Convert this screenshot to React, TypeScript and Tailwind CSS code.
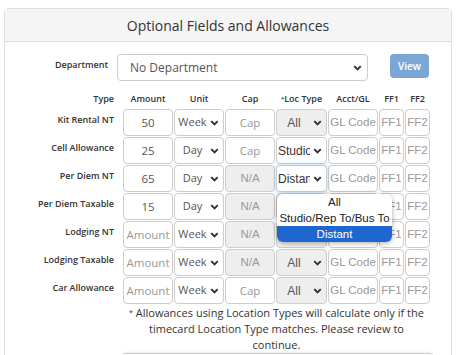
import * as React from "react";

type Cell = { text: string; kind: "value" | "placeholder" | "na" };
type Loc = { text: string; kind: "disabled" | "open" | "focus" };

interface IRow {
  label: string;
  amount: Cell;
  unit: string;
  cap: Cell;
  loc: Loc;
}

const Chevron = () => (
  <svg width="9" height="6" viewBox="0 0 10 7" className="shrink-0">
    <path d="M1.2 1.3 L5 5.2 L8.8 1.3" fill="none" stroke="#333" strokeWidth="2.3" />
  </svg>
);

const arial = "font-['Liberation_Sans',Arial,sans-serif]";
const box = "h-[27px] border border-[#ccc] rounded-[4px] flex items-center overflow-hidden";

const InputCell = ({ cell, w }: { cell: Cell; w: string }) => (
  <div
    className={`${box} ${w} justify-center ${
      cell.kind === "na" ? `bg-[#eee] text-[#999] text-[11.5px] ${arial}` : "bg-white text-[11.5px]"
    } ${cell.kind === "value" ? "text-[#555]" : ""} ${cell.kind === "placeholder" ? "text-[#999]" : ""}`}
  >
    {cell.text}
  </div>
);

const App: React.FunctionComponent = () => {
  const rows: IRow[] = [
    { label: "Kit Rental NT", amount: { text: "50", kind: "value" }, unit: "Week", cap: { text: "Cap", kind: "placeholder" }, loc: { text: "All", kind: "disabled" } },
    { label: "Cell Allowance", amount: { text: "25", kind: "value" }, unit: "Day", cap: { text: "Cap", kind: "placeholder" }, loc: { text: "Studio/Rep To/Bus To", kind: "open" } },
    { label: "Per Diem NT", amount: { text: "65", kind: "value" }, unit: "Day", cap: { text: "N/A", kind: "na" }, loc: { text: "Distant", kind: "focus" } },
    { label: "Per Diem Taxable", amount: { text: "15", kind: "value" }, unit: "Day", cap: { text: "N/A", kind: "na" }, loc: { text: "All", kind: "disabled" } },
    { label: "Lodging NT", amount: { text: "Amount", kind: "placeholder" }, unit: "Week", cap: { text: "N/A", kind: "na" }, loc: { text: "All", kind: "disabled" } },
    { label: "Lodging Taxable", amount: { text: "Amount", kind: "placeholder" }, unit: "Week", cap: { text: "N/A", kind: "na" }, loc: { text: "All", kind: "disabled" } },
    { label: "Car Allowance", amount: { text: "Amount", kind: "placeholder" }, unit: "Week", cap: { text: "Cap", kind: "placeholder" }, loc: { text: "All", kind: "disabled" } },
  ];

  const headers = [
    { t: "Amount", w: "w-[50px]" },
    { t: "Unit", w: "w-[50px]" },
    { t: "Cap", w: "w-[50px]" },
    { t: "Loc Type", w: "w-[51px]", star: true },
    { t: "Acct/GL", w: "w-[50px]" },
    { t: "FF1", w: "w-[25px]" },
    { t: "FF2", w: "w-[25px]" },
  ];

  return (
    <div className="w-[459px] h-[355px] overflow-hidden bg-white pt-2 pl-1 font-['Open_Sans',sans-serif]">
      <div className="w-[448px] min-h-[400px] border border-[#ddd] rounded-t-[4px]">
        <div className="h-[33px] bg-[#f5f5f5] border-b border-[#ddd] flex items-center justify-center text-[14px] text-[#333]">
          Optional Fields and Allowances
        </div>

        <div className="pt-3">
          {/* department */}
          <div className="flex items-start">
            <div className="w-[103px] pt-[5px] text-right text-[9px] leading-[12px] font-semibold text-[#333]">
              Department
            </div>
            <div className="ml-[9px] w-[251px] h-[27px] border border-[#ccc] rounded-[4px] flex items-center pl-3 pr-[5px] text-[12px] text-[#555]">
              <span className="flex-1">No Department</span>
              <Chevron />
            </div>
            <div className="ml-[22px] w-[39px] h-[24px] rounded-[4px] bg-[#7ba7d5] text-white text-[10px] font-semibold flex items-center justify-center">
              View
            </div>
          </div>

          {/* table */}
          <div className="flex flex-col gap-px">
            <div className="flex h-[27px] pt-[12px] text-[9px] leading-[12px] font-semibold text-[#333]">
              <div className="w-[109px] text-right">Type</div>
              <div className="ml-[9px] flex gap-px">
                {headers.map((h) => (
                  <div key={h.t} className={`${h.w} text-center whitespace-nowrap`}>
                    {h.star && <span className="text-[6px] align-top">*</span>}
                    {h.t}
                  </div>
                ))}
              </div>
            </div>

            {rows.map((r) => (
              <div key={r.label} className="flex items-start">
                <div className="w-[109px] pt-[5px] text-right text-[9px] leading-[12px] font-semibold text-[#333]">
                  {r.label}
                </div>
                <div className="ml-[9px] flex gap-px">
                  <InputCell cell={r.amount} w="w-[50px]" />
                  <div className={`${box} w-[50px] bg-white pr-[4px] text-[11px] text-[#555]`}>
                    <span className="flex-1 min-w-0 mr-[2px] pl-[2px] overflow-hidden whitespace-nowrap text-center">{r.unit}</span>
                    <Chevron />
                  </div>
                  <InputCell cell={r.cap} w="w-[50px]" />
                  <div className="relative">
                    <div
                      className={`${box} w-[51px] pr-[4px] text-[12px] ${arial} ${
                        r.loc.kind === "disabled" ? "bg-[#eee] text-[#555]" : "bg-white text-[#333]"
                      } ${r.loc.kind === "focus" ? "border-[#66afe9] shadow-[0_0_4px_rgba(102,175,233,0.6)]" : ""}`}
                    >
                      <span className="flex-1 min-w-0 mr-[3px] pl-px overflow-hidden whitespace-nowrap text-center">
                        {r.loc.text}
                      </span>
                      <Chevron />
                    </div>
                    {r.loc.kind === "focus" && (
                      <div className={`absolute left-px top-[29px] z-10 w-[115px] bg-white rounded-[6px] overflow-hidden shadow-[0_1px_5px_rgba(0,0,0,0.35)] text-[11.5px] leading-[16px] text-[#222] text-center ${arial}`}>
                        <div>All</div>
                        <div className="whitespace-nowrap">Studio/Rep To/Bus To</div>
                        <div className="bg-[#1e67cf] text-white">Distant</div>
                      </div>
                    )}
                  </div>
                  <div className={`${box} w-[50px] bg-white justify-center text-[11.5px] text-[#999] whitespace-nowrap ${arial}`}>GL Code</div>
                  <div className={`${box} w-[25px] bg-white justify-center text-[11.5px] text-[#999] ${arial}`}>FF1</div>
                  <div className={`${box} w-[25px] bg-white justify-center text-[11.5px] text-[#999] ${arial}`}>FF2</div>
                </div>
              </div>
            ))}

            <div className="ml-[118px] w-[307px] text-center text-[11px] leading-[16px] text-[#333]">
              <span className="text-[7px] align-top">*</span> Allowances using Location Types will calculate only if the
              <br />
              timecard Location Type matches. Please review to
              <br />
              continue.
            </div>
          </div>

          <div className="ml-[117px] w-[311px] h-[20px] border-t border-[#ccc] rounded-t-[4px] shadow-[0_-1px_2px_rgba(0,0,0,0.08)]" />
        </div>
      </div>
    </div>
  );
};

export default App;
